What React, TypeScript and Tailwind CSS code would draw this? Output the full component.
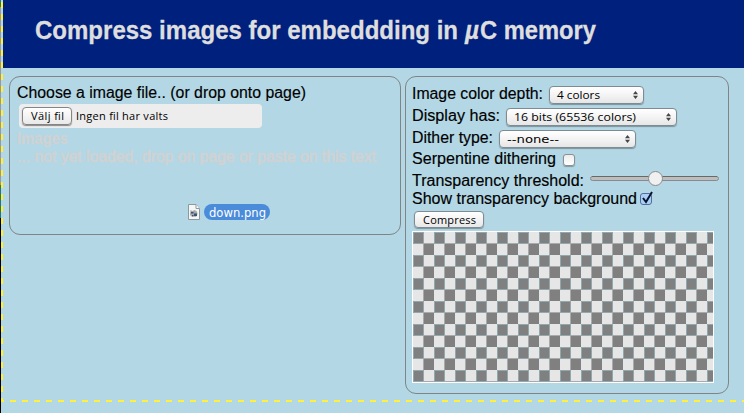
import React from "react";

const ui = "font-['Lucida_Grande','Open_Sans','Noto_Sans',sans-serif]";
const wide = "font-['DejaVu_Sans',sans-serif]";

function Line({ text, w, className = "", weight, stroke = 0.15 }: { text: React.ReactNode; w: number; className?: string; weight?: number; stroke?: number }) {
  return (
    <svg width={w} height="20" className={`block shrink-0 overflow-visible ${className}`}>
      <text x="0" y="15" textLength={w} lengthAdjust="spacingAndGlyphs" fontSize="16" fontWeight={weight} fill="currentColor" stroke="currentColor" strokeWidth={stroke}>
        {text}
      </text>
    </svg>
  );
}

function Select({ label, labelWidth, className, font = ui }: { label: string; labelWidth: number; className: string; font?: string }) {
  return (
    <button className={`flex h-[18px] shrink-0 items-center justify-between rounded-[4px] border border-[#7f8b92] bg-linear-to-b from-white via-[#f4f4f4] to-[#e6e6e6] pr-[5px] pl-[7px] text-black shadow-[0_1px_1px_#7d939d] ${font} ${className}`}>
      <svg width={labelWidth} height="16" className="block overflow-visible">
        <text x="0" y="12" fontSize="11" textLength={labelWidth} lengthAdjust="spacingAndGlyphs" fill="#000">{label}</text>
      </svg>
      <svg width="5" height="8" viewBox="0 0 5 8" fill="#444"><path d="M2.5 0 5 3.2H0zM0 4.8h5L2.5 8z" /></svg>
    </button>
  );
}

export default function App() {
  return (
    <div className="flex h-[413px] w-[744px] overflow-hidden bg-[#b3d7e5] font-['Liberation_Sans',Arial,sans-serif] text-base text-black">
      <div className="flex w-px shrink-0 flex-col">
        <div className="h-[7px] bg-[#27776f]" />
        <div className="h-[178px] bg-[#999]" />
        <div className="h-[33px] bg-[#27776f]" />
        <div className="flex-1 bg-black" />
      </div>
      <div className="h-[402px] w-[2px] shrink-0 bg-[repeating-linear-gradient(to_bottom,#b3d7e5_0px,#b3d7e5_2px,#fff13b_2px,#fff13b_8px,#b3d7e5_8px,#b3d7e5_12px)]" />
      <div className="flex min-w-0 flex-1 flex-col">
        <header className="flex h-[68px] shrink-0 items-start bg-[#00207d] pt-[17px] pl-8 text-[#dedede]">
          <svg width="562" height="30" className="block overflow-visible" fontSize="25" fontWeight="700" fill="currentColor" stroke="currentColor" strokeWidth="0.3">
            <text x="0" y="22" textLength="423" lengthAdjust="spacingAndGlyphs">Compress images for embeddding in</text>
            <text x="430" y="22" textLength="14" lengthAdjust="spacingAndGlyphs" fontStyle="italic">µ</text>
            <text x="445" y="22" textLength="116" lengthAdjust="spacingAndGlyphs">C memory</text>
          </svg>
        </header>
        <main className="flex h-[332px] shrink-0 items-start gap-[4px] pt-2 pl-[6px]">
          <section className="h-[159px] w-[392px] shrink-0 rounded-[11px] border border-[#7f8587] pt-[6px] pl-[7px]">
            <Line text="Choose a image file.. (or drop onto page)" w={289} />
            <div className={`mt-px ml-[2px] flex h-6 w-[243px] items-center gap-[4px] rounded-[4px] bg-[#ededed] pl-[3px] ${ui}`}>
              <button className="flex h-[18px] w-[50px] items-center justify-center rounded-[4px] border border-[#858585] bg-linear-to-b from-white to-[#e9e9e9] shadow-[0_1px_1px_#888]">
                <svg width="33" height="16" className="overflow-visible"><text y="12" fontSize="11" textLength="33">Välj fil</text></svg>
              </button>
              <svg width="92" height="16" className="overflow-visible"><text y="12" fontSize="11" textLength="92">Ingen fil har valts</text></svg>
            </div>
            <div className="mt-px text-[#d0d2d3]">
              <Line text="Images" w={51} weight={700} className="h-[18px]" />
              <Line text="... not yet loaded, drop on page or paste on this text" w={359} stroke={0.7} />
            </div>
            <div className="mt-[37px] ml-[171px] flex items-center gap-[4px]">
              <svg width="12" height="16" viewBox="0 0 12 16">
                <path d="M.5.5H8l3.5 4v11H.5z" fill="#f5f6f6" stroke="#8d999e" />
                <path d="M8 .5v4h3.5" fill="#fff" stroke="#8d999e" />
                <path d="m2.500 6 2 1 2-1 2 1 1 2-.5 3-2 1-2-1-2 .5-1-2z" fill="#a3abb0" />
                <path d="M3 8h2.500v1.500H3zM6 9.500h3V12H6zM4 11h1.500v1.500H4z" fill="#3f5268" />
              </svg>
              <div className="flex h-4 w-[66px] items-center justify-center rounded-full bg-[#4a8bda]">
                <svg width="57" height="16" className={`overflow-visible ${wide}`}><text y="13" fontSize="12" textLength="57" lengthAdjust="spacingAndGlyphs" fill="white">down.png</text></svg>
              </div>
            </div>
          </section>
          <section className="h-[318px] w-[324px] shrink-0 rounded-[11px] border border-[#7f8587] pt-[7px] pl-[6px]">
            <div className="flex h-[22px] items-start gap-[6px]">
              <Line text="Image color depth:" w={131} />
              <Select label="4 colors" labelWidth={43} className="mt-[2px] w-[95px]" />
            </div>
            <div className="flex h-[22px] items-start gap-[6px]">
              <Line text="Display has:" w={88} />
              <Select label="16 bits (65536 colors)" labelWidth={122} className="mt-[2px] w-[171px]" />
            </div>
            <div className="flex h-[22px] items-start gap-[6px]">
              <Line text="Dither type:" w={81} />
              <Select label="--none--" labelWidth={52} font={wide} className="mt-[2px] w-[137px]" />
            </div>
            <div className="flex h-[21px] items-start gap-[7px]">
              <Line text="Serpentine dithering" w={144} className="-mt-px" />
              <div className="mt-[4px] h-3 w-3 rounded-[3px] border border-[#8a8f92] bg-linear-to-b from-[#ededed] to-white shadow-[0_1px_1px_#8298a1]" />
            </div>
            <div className="flex h-[19px] items-start gap-[6px]">
              <Line text="Transparency threshold:" w={172} />
              <svg width="129" height="16" className="block">
                <rect x=".5" y="5.5" width="128" height="4" rx="2" fill="#bdbdbd" stroke="#858b8e" />
                <path d="M2 5.500h125" stroke="#686868" />
                <circle cx="65.5" cy="7.500" r="7" fill="#f0f0f0" stroke="#8b8b8b" />
              </svg>
            </div>
            <div className="flex h-[21px] items-start gap-[3px]">
              <Line text="Show transparency background" w={225} className="-mt-px" />
              <svg width="14" height="15" viewBox="0 0 14 15" className="mt-px overflow-visible">
                <rect x=".5" y="2.5" width="11" height="11" rx="2.5" fill="#a9cff4" stroke="#536c9c" />
                <path d="m3 7 3 4 6-10" fill="none" stroke="#071332" strokeWidth="2" />
              </svg>
            </div>
            <button className={`ml-[2px] flex h-[17px] w-[70px] items-center justify-center rounded-[4px] border border-[#7f8b92] bg-linear-to-b from-white to-[#e8e8e8] shadow-[0_1px_1px_#7d939d] ${ui}`}>
              <svg width="53" height="16" className="overflow-visible"><text y="12" fontSize="11" textLength="53">Compress</text></svg>
            </button>
            <svg width="302" height="152" className="mt-[3px] block">
              <defs>
                <pattern id="checks" x="1" y="1" width="21" height="23" patternUnits="userSpaceOnUse">
                  <rect width="21" height="23" fill="#e6e6e6" />
                  <rect width="11" height="12" fill="#92a8af" />
                  <rect x="10" y="11" width="11" height="12" fill="#aaa" />
                  <rect x="1" y="1" width="9" height="10" fill="#808080" />
                  <rect x="11" y="12" width="10" height="11" fill="#808080" />
                </pattern>
              </defs>
              <rect width="302" height="152" fill="white" />
              <rect x="1" y="1" width="300" height="150" fill="url(#checks)" />
            </svg>
          </section>
        </main>
        <svg width="744" height="2" className="-ml-[2px] block shrink-0">
          <path d="M0 1h3M9 1h735" stroke="#fff13b" strokeWidth="2" strokeDasharray="6 6" />
        </svg>
      </div>
    </div>
  );
}
